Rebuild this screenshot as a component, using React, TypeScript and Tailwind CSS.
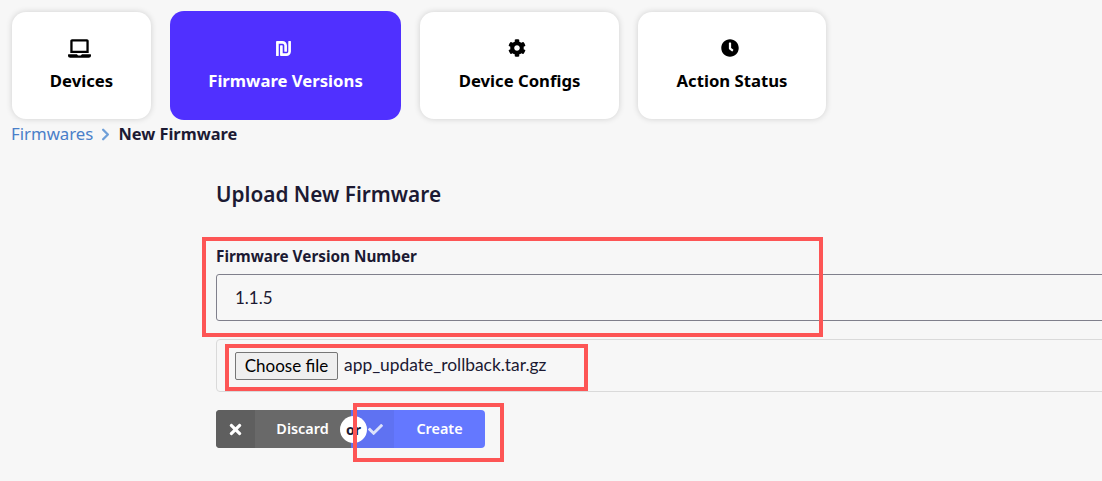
import { FaLaptop, FaShekelSign, FaCog, FaClock, FaTimes, FaCheck } from 'react-icons/fa';
import { LuChevronRight } from 'react-icons/lu';
import type { ReactNode } from 'react';

const uiFont = "font-['Noto_Sans',sans-serif]";

const NavCard = ({ icon, label, width, active }: { icon: ReactNode; label: string; width: string; active?: boolean }) => (
  <div
    className={`flex flex-col items-center rounded-[14px] ${width} ${
      active
        ? 'h-[109px] bg-[#5030ff] text-white pt-[27px]'
        : 'h-[107px] bg-white text-black pt-[26px] shadow-[0_0_6px_rgba(0,0,0,0.16)]'
    }`}
  >
    <div className="h-[20px] flex items-center justify-center mr-[5px]">{icon}</div>
    <span className="mt-[11px] text-[16.7px] leading-[24px] font-bold">{label}</span>
  </div>
);

const Annotation = ({ className }: { className: string }) => (
  <div className={`absolute border-[4px] border-[#fd5555] pointer-events-none ${className}`} />
);

export default function App() {
  return (
    <div className={`relative w-[1102px] h-[481px] overflow-hidden bg-[#f7f7f7] text-[#1c1a33] ${uiFont}`}>
      <div className="flex items-center gap-[19px] pl-[12px] pt-[11px] h-[120px]">
        <NavCard icon={<FaLaptop className="text-[23px]" />} label="Devices" width="w-[139px]" />
        <NavCard icon={<FaShekelSign className="text-[17px]" />} label="Firmware Versions" width="w-[231px]" active />
        <NavCard icon={<FaCog className="text-[18px]" />} label="Device Configs" width="w-[199px]" />
        <NavCard icon={<FaClock className="text-[18px]" />} label="Action Status" width="w-[188px]" />
      </div>

      <div className="flex items-center pl-[11px] h-[28px]">
        <span className="text-[#4a7fc9] text-[16.8px]">Firmwares</span>
        <LuChevronRight className="mx-[3px] text-[#6f9fd8] text-[19px]" strokeWidth={3} />
        <span className="font-bold text-[16.4px]">New Firmware</span>
      </div>

      <div className="ml-[216px] w-[1000px]">
        <h1 className="mt-[31px] text-[20.8px] leading-[30px] font-semibold">Upload New Firmware</h1>

        <label className="block mt-[36px] text-[15.3px] leading-[22px] font-bold">Firmware Version Number</label>
        <div className="mt-[7px] h-[47px] flex items-center pl-[18px] border border-[#80808c] rounded-[3px] font-['Lato',sans-serif] text-[17px]">
          1.1.5
        </div>

        <div className="mt-[18px] h-[53px] flex items-center pl-[18px] border border-[#dadada] rounded-[4px] font-['Lato',sans-serif]">
          <button className="h-[28px] w-[103px] bg-[#efefef] border border-[#767676] rounded-[2px] text-black text-[17px] leading-none">
            Choose file
          </button>
          <span className="ml-[6px] text-[17.4px]">app_update_rollback.tar.gz</span>
        </div>

        <div className="relative mt-[18px] flex h-[38px] w-[269px] text-white text-[14.4px] font-semibold">
          <div className="flex w-[135px] rounded-l-[4px] overflow-hidden bg-[#696969]">
            <span className="w-[39px] flex items-center justify-center bg-[#5f5f5f]">
              <FaTimes className="text-[17px]" />
            </span>
            <span className="flex-1 flex items-center justify-center pr-[1px]">Discard</span>
          </div>
          <div className="flex flex-1 rounded-r-[4px] overflow-hidden bg-[#6478ff]">
            <span className="w-[43px] flex items-center justify-center pl-[5px] bg-[#5f72f2]">
              <FaCheck className="text-[#dde2fb] text-[15px]" />
            </span>
            <span className="flex-1 flex items-center justify-center">Create</span>
          </div>
          <span className="absolute left-[124px] top-[6px] w-[27px] h-[27px] rounded-full bg-white text-[#1c1a33] flex items-center justify-center text-[14px] font-bold leading-none">
            or
          </span>
        </div>
      </div>

      <Annotation className="left-[202px] top-[237px] w-[621px] h-[100px]" />
      <Annotation className="left-[225px] top-[344px] w-[363px] h-[47px]" />
      <Annotation className="left-[353px] top-[403px] w-[151px] h-[59px]" />
    </div>
  );
}
